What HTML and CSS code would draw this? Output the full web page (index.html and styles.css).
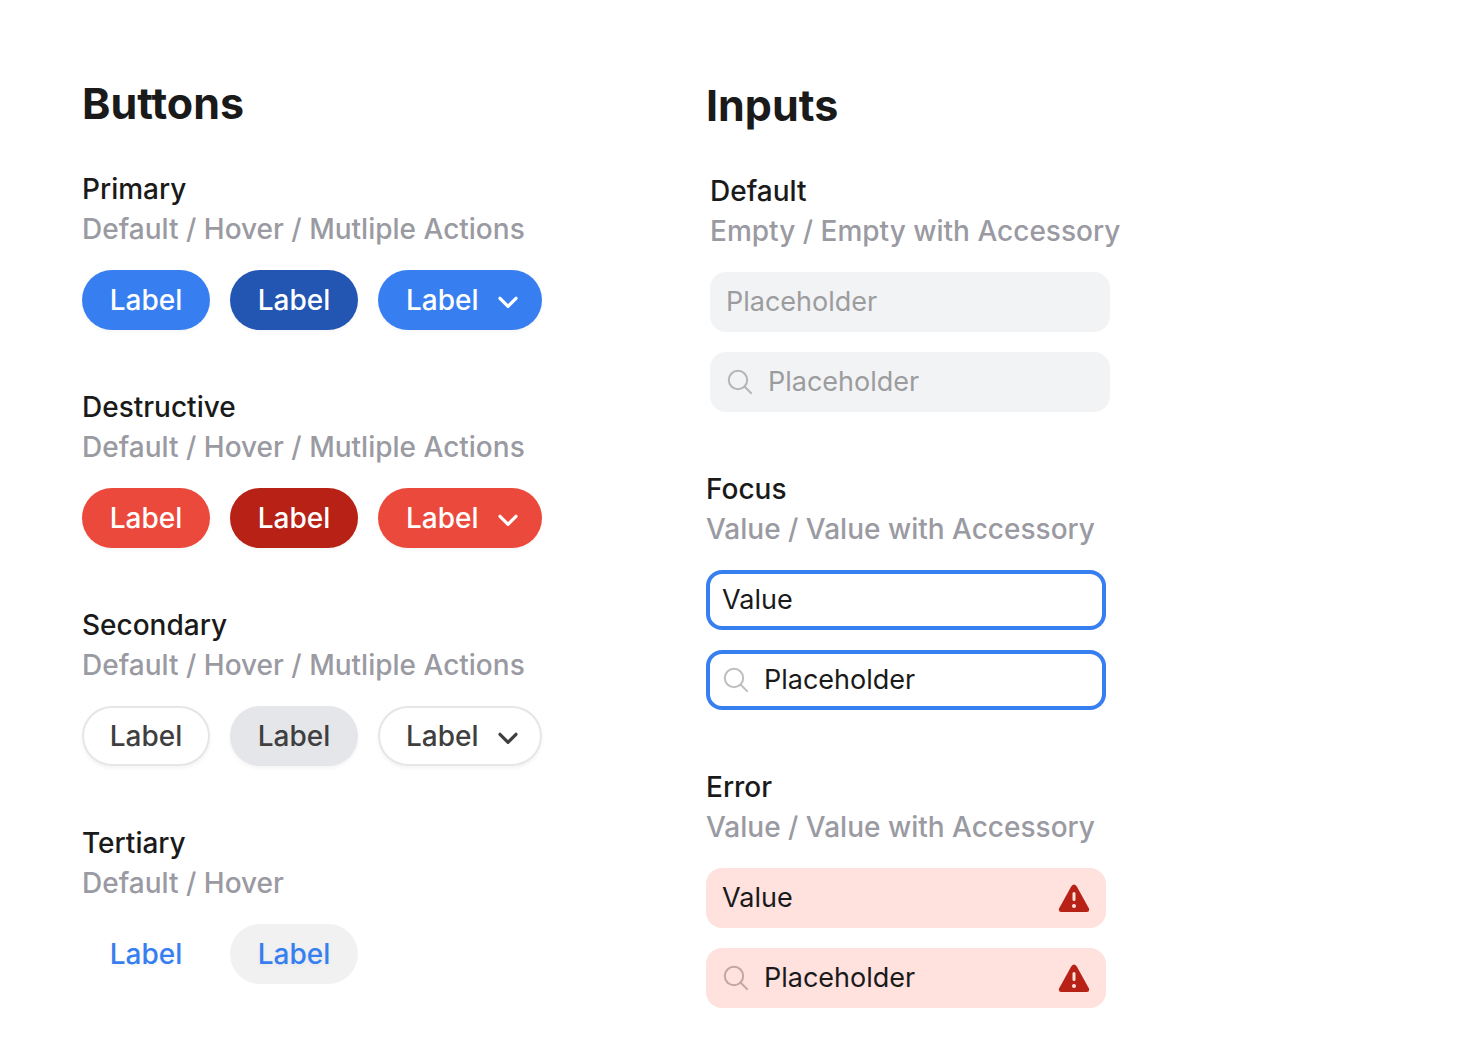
FILE: index.html
```html
<!DOCTYPE html>
<html lang="en">
<head>
<meta charset="utf-8">
<meta name="viewport" content="width=device-width, initial-scale=1">
<title>Buttons and Inputs</title>
<link rel="stylesheet" href="styles.css">
</head>
<body>
<svg class="sprite" aria-hidden="true">
  <symbol id="chevron" viewBox="0 0 20 14"><path d="M2 3.3l8 8 8-8" fill="none" stroke="currentColor" stroke-width="3.2" stroke-linecap="round" stroke-linejoin="round"/></symbol>
  <symbol id="search" viewBox="0 0 28 28"><circle cx="12" cy="12" r="9.2" fill="none" stroke="currentColor" stroke-width="2"/><path d="M18.5 18.5l6.6 6.6" fill="none" stroke="currentColor" stroke-width="2" stroke-linecap="round"/></symbol>
  <symbol id="warning" viewBox="0 0 32 28"><path d="M13.2 2.4Q16-1.2 18.8 2.4L30.8 24.2Q32 27.8 28.8 28H3.2Q0 27.8 1.2 24.2Z" fill="currentColor"/><path d="M16 9.5v6" class="warning-mark" stroke-width="3" stroke-linecap="round"/><circle cx="16" cy="22" r="2" class="warning-dot"/></symbol>
</svg>
<main class="page">
  <section class="column">
    <h1 class="heading">Buttons</h1>
    <section class="group">
      <h2 class="title">Primary</h2>
      <p class="states">Default / Hover / Mutliple Actions</p>
      <div class="buttons">
        <button type="button" class="button primary">Label</button>
        <button type="button" class="button primary-hover">Label</button>
        <button type="button" class="button primary menu">Label<svg class="chevron"><use href="#chevron"/></svg></button>
      </div>
    </section>
    <section class="group">
      <h2 class="title">Destructive</h2>
      <p class="states">Default / Hover / Mutliple Actions</p>
      <div class="buttons">
        <button type="button" class="button destructive">Label</button>
        <button type="button" class="button destructive-hover">Label</button>
        <button type="button" class="button destructive menu">Label<svg class="chevron"><use href="#chevron"/></svg></button>
      </div>
    </section>
    <section class="group">
      <h2 class="title">Secondary</h2>
      <p class="states">Default / Hover / Mutliple Actions</p>
      <div class="buttons">
        <button type="button" class="button secondary">Label</button>
        <button type="button" class="button secondary secondary-hover">Label</button>
        <button type="button" class="button secondary menu">Label<svg class="chevron"><use href="#chevron"/></svg></button>
      </div>
    </section>
    <section class="group">
      <h2 class="title">Tertiary</h2>
      <p class="states">Default / Hover</p>
      <div class="buttons">
        <button type="button" class="button tertiary">Label</button>
        <button type="button" class="button tertiary tertiary-hover">Label</button>
      </div>
    </section>
  </section>

  <section class="column inputs">
    <h1 class="heading">Inputs</h1>
    <section class="group inset">
      <h2 class="title"><label for="default-empty">Default</label></h2>
      <p class="states"><label for="default-accessory">Empty / Empty with Accessory</label></p>
      <div class="fields">
        <div class="field"><input id="default-empty" class="control" type="text" placeholder="Placeholder"></div>
        <div class="field"><svg class="search"><use href="#search"/></svg><input id="default-accessory" class="control" type="text" placeholder="Placeholder"></div>
      </div>
    </section>
    <section class="group">
      <h2 class="title"><label for="focus-value">Focus</label></h2>
      <p class="states"><label for="focus-accessory">Value / Value with Accessory</label></p>
      <div class="fields">
        <div class="field focus"><input id="focus-value" class="control" type="text" value="Value"></div>
        <div class="field focus"><svg class="search"><use href="#search"/></svg><input id="focus-accessory" class="control" type="text" value="Placeholder"></div>
      </div>
    </section>
    <section class="group">
      <h2 class="title"><label for="error-value">Error</label></h2>
      <p class="states"><label for="error-accessory">Value / Value with Accessory</label></p>
      <div class="fields">
        <div class="field error"><input id="error-value" class="control" type="text" value="Value" aria-invalid="true"><svg class="warning"><use href="#warning"/></svg></div>
        <div class="field error"><svg class="search"><use href="#search"/></svg><input id="error-accessory" class="control" type="text" value="Placeholder" aria-invalid="true"><svg class="warning"><use href="#warning"/></svg></div>
      </div>
    </section>
  </section>
</main>
</body>
</html>
```
FILE: styles.css
```css
* { box-sizing: border-box; }

body {
  margin: 0;
  background: #fff;
  color: #1a1a1a;
  font-family: Inter, "Liberation Sans", sans-serif;
}

.sprite { display: none; }

.page {
  display: grid;
  grid-template-columns: 1fr 1fr;
  padding: 75px 130px 40px 82px;
}

.inputs { padding-top: 2px; }

.heading {
  margin: 0 0 38px;
  font-size: 43px;
  line-height: 56px;
  font-weight: 700;
}

.group { margin-bottom: 57px; }
.group:last-child { margin-bottom: 0; }
.inset { padding-left: 4px; }

.title,
.states {
  margin: 0;
  font-size: 28px;
  line-height: 40px;
  font-weight: 500;
}

.states { color: #9a9aa2; white-space: nowrap; }

.buttons {
  display: flex;
  gap: 20px;
  margin-top: 21px;
}

.button {
  display: flex;
  align-items: center;
  justify-content: center;
  width: 128px;
  height: 60px;
  padding: 0;
  border: 0;
  border-radius: 30px;
  background: none;
  color: #fff;
  font: 500 28px/40px Inter, "Liberation Sans", sans-serif;
}

.menu {
  justify-content: space-between;
  width: 164px;
  padding: 0 24px 0 28px;
}

.chevron { width: 20px; height: 14px; margin-top: 4px; }

.primary { background: #377ff0; box-shadow: 0 2px 4px rgba(0, 0, 0, 0.04); }
.primary-hover { background: #2355b2; box-shadow: 0 2px 4px rgba(0, 0, 0, 0.04); }
.destructive { background: #eb493c; box-shadow: 0 2px 4px rgba(0, 0, 0, 0.04); }
.destructive-hover { background: #b82116; box-shadow: 0 2px 4px rgba(0, 0, 0, 0.04); }

.secondary {
  background: #fff;
  color: #3f3f3f;
  box-shadow: inset 0 0 0 2px #e6e6e6, 0 2px 4px rgba(0, 0, 0, 0.05);
}

.secondary-hover {
  background: #e5e6ea;
  box-shadow: 0 2px 4px rgba(0, 0, 0, 0.05);
}

.tertiary { color: #377ff0; text-shadow: 0 2px 4px rgba(0, 0, 0, 0.05); }
.tertiary-hover { background: #f1f1f1; }

.fields {
  display: grid;
  grid-template-columns: minmax(0, 1fr);
  gap: 20px;
  max-width: 400px;
  margin-top: 21px;
}

.field {
  display: flex;
  align-items: center;
  gap: 14px;
  height: 60px;
  padding: 0 16px;
  border-radius: 16px;
  background: #f2f3f5;
}

.focus { background: #fff; box-shadow: inset 0 0 0 4px #377ff0; }
.error { background: #ffe1de; }

.control {
  flex: 1;
  min-width: 0;
  height: 40px;
  padding: 0;
  border: 0;
  outline: 0;
  background: none;
  color: #1a1a1a;
  font: 400 27px/40px Inter, "Liberation Sans", sans-serif;
}

.control::placeholder { color: #9c9c9e; opacity: 1; }

.search { flex: none; width: 28px; height: 28px; color: #000; opacity: 0.25; }
.warning { flex: none; width: 32px; height: 28px; color: #b82116; }
.warning-mark { stroke: #ffe1de; }
.warning-dot { fill: #ffe1de; }
```
